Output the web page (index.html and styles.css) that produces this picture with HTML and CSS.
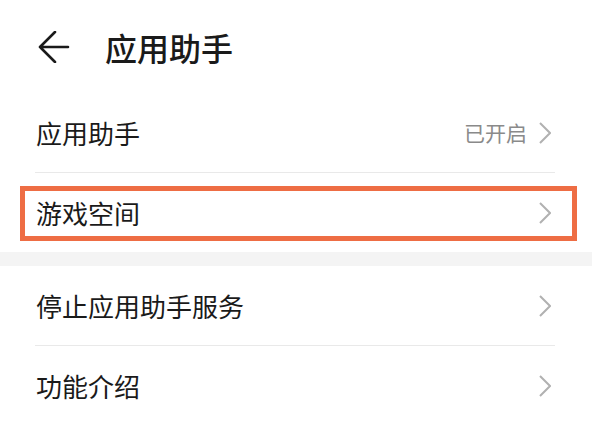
FILE: index.html
```html
<!DOCTYPE html>
<html lang="zh-CN">
<head>
    <meta charset="utf-8">
    <title>应用助手</title>
    <meta name="viewport" content="width=device-width, initial-scale=1">
    <link rel="stylesheet" href="styles.css">
</head>
<body>
<div class="page">
    <div class="header">
        <span class="back">
            <svg width="32" height="32" viewBox="0 0 32 32">
                <path d="M30 16 H2 M17 1 L2 16 L17 31" fill="none" stroke="#1a1a1a" stroke-width="2.6" stroke-linecap="round" stroke-linejoin="round"/>
            </svg>
        </span>
        <h1>应用助手</h1>
    </div>

    <div class="group">
        <div class="row line">
            <span class="label">应用助手</span>
            <span class="value">已开启</span>
            <svg class="arrow" width="12" height="22" viewBox="0 0 12 22"><path d="M1 1 L11 11 L1 21" fill="none" stroke="#b1b1b1" stroke-width="2"/></svg>
        </div>
        <div class="row mark">
            <span class="label">游戏空间</span>
            <svg class="arrow" width="12" height="22" viewBox="0 0 12 22"><path d="M1 1 L11 11 L1 21" fill="none" stroke="#b1b1b1" stroke-width="2"/></svg>
        </div>
    </div>

    <div class="gap"></div>

    <div class="group">
        <div class="row line">
            <span class="label">停止应用助手服务</span>
            <svg class="arrow" width="12" height="22" viewBox="0 0 12 22"><path d="M1 1 L11 11 L1 21" fill="none" stroke="#b1b1b1" stroke-width="2"/></svg>
        </div>
        <div class="row">
            <span class="label">功能介绍</span>
            <svg class="arrow" width="12" height="22" viewBox="0 0 12 22"><path d="M1 1 L11 11 L1 21" fill="none" stroke="#b1b1b1" stroke-width="2"/></svg>
        </div>
    </div>
</div>
</body>
</html>
```

FILE: styles.css
```css
body {
    margin: 0;
    background: #fff;
    font-family: "Noto Sans CJK SC", "Noto Sans", sans-serif;
    color: #1a1a1a;
}

.page {
    width: 592px;
    height: 421px;
    overflow: hidden;
}

.header {
    height: 93px;
    display: flex;
    align-items: center;
    padding-left: 38px;
}

.back {
    display: flex;
    width: 32px;
    height: 32px;
}

.header h1 {
    margin: 0 0 0 35px;
    font-size: 32px;
    font-weight: 500;
    line-height: 1;
}

.row {
    position: relative;
    height: 79px;
    margin: 0 37px 0 35px;
    display: flex;
    align-items: center;
}

.row.line {
    border-bottom: 1px solid #e9e9e9;
}

.label {
    flex: 1;
    padding-left: 1px;
    font-size: 26px;
    line-height: 1;
}

.value {
    font-size: 21px;
    line-height: 1;
    color: #8a8a8a;
    margin-right: 12px;
}

.arrow {
    margin-right: 4px;
}

/* 高亮框 */
.row.mark::after {
    content: "";
    position: absolute;
    left: -15px;
    right: -22px;
    top: 13px;
    bottom: 11px;
    border: 5px solid #ee6d44;
}

.gap {
    height: 14px;
    background: #f4f4f4;
}
```
